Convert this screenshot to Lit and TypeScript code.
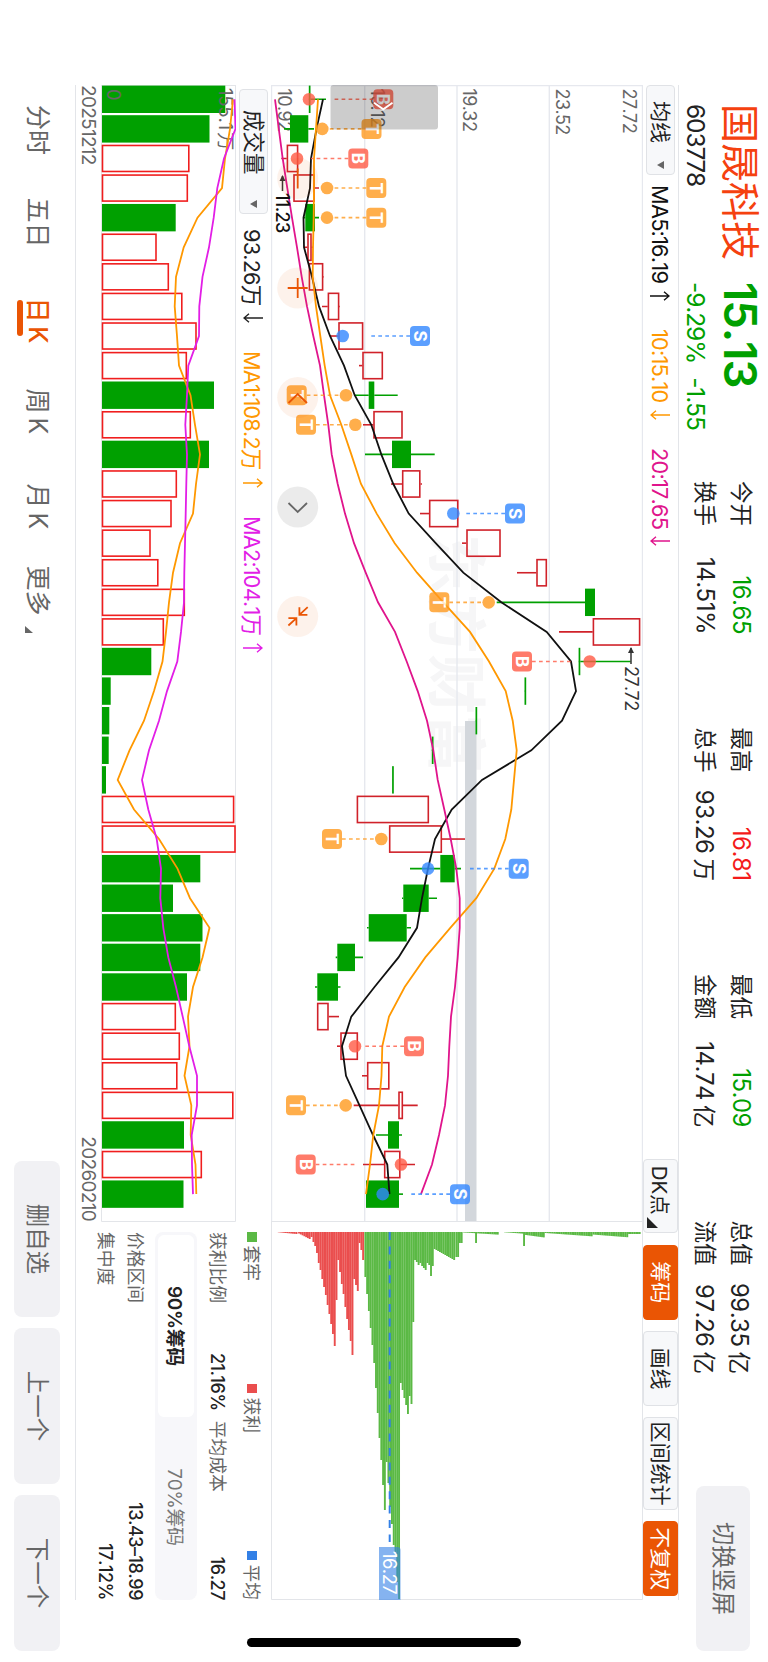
import { LitElement, css, html, svg } from 'lit'
import { customElement, property } from 'lit/decorators.js'

const STEP = 29.59
const FIRST = 14.3
const UP = '#d0222a'
const DOWN = '#00a000'

const centre = (i: number) => FIRST + i * STEP

const line = (values: number[], base: number) =>
  values.map((v, i) => `${centre(i).toFixed(1)},${(base - v).toFixed(1)}`).join(' ')

// [direction, low, body bottom, body top, high], heights above the price axis
type Candle = ['u' | 'd', number, number, number, number]
const candles: Candle[] = [
  ['d', 37, 36.8, 38.5, 54], ['d', 12, 18, 36.3, 42], ['u', 9.3, 14.7, 26.3, 26.3],
  ['u', 21.3, 21.3, 42.7, 47], ['d', 31, 33.3, 43, 47], ['u', 32, 35.3, 39.7, 41],
  ['u', 36.7, 36.7, 51.3, 51.8], ['u', 50, 55.7, 67.3, 68], ['u', 58, 66.3, 91.3, 91.3],
  ['u', 87, 90.3, 111, 111], ['d', 82.7, 96.7, 102.3, 125.7], ['u', 91, 101.3, 130.7, 130.7],
  ['d', 93, 120, 139, 162.7], ['u', 119, 130, 148.5, 150], ['u', 148, 157, 186.5, 186.5],
  ['u', 190, 194.3, 228.7, 228.7], ['u', 245, 264.3, 275, 275], ['d', 224.7, 313, 323, 323],
  ['u', 287, 320.7, 368.3, 368.3], ['d', 306.8, 306.6, 308.3, 358.7], ['d', 252.7, 252.5, 254.2, 254.2],
  ['d', 203.7, 203.5, 205.2, 205.2], ['d', 160, 159.8, 161.5, 161.5], ['d', 120.3, 120.1, 121.8, 121.8],
  ['u', 84.7, 84.7, 157, 157], ['u', 117, 117, 170, 193], ['d', 138, 168.3, 182.7, 189],
  ['d', 130, 131.3, 156.7, 165], ['d', 95, 96.7, 134.7, 139], ['d', 63.7, 65.3, 83, 91],
  ['d', 43, 45.3, 66, 68.5], ['u', 45, 45, 56.7, 67], ['u', 65, 68.3, 86, 86],
  ['u', 90, 95, 117.5, 117.5], ['u', 81.7, 126.3, 131, 145.7], ['d', 104, 116, 127, 130],
  ['u', 91, 112, 128.5, 143], ['d', 94, 94, 127, 131],
]

const ma5 = [51, 44.5, 39, 38, 31.5, 32, 40, 47, 58, 72, 82.7, 99.3, 109.3, 121.3, 136.7, 163.7, 191.3, 229.3,
  274.7, 299, 304, 290, 259.3, 210, 179.7, 163, 156, 150, 145, 126.5, 102.5, 79.3, 70, 74, 87.5, 101, 115.3, 117.5]
const ma10 = [46, 44, 42, 42, 41.7, 41, 40.7, 44, 48.3, 52.7, 58, 69.3, 79.3, 89, 104.7, 122.7, 145, 171.3,
  198, 217, 233.7, 240.7, 244.7, 242, 239.3, 233.3, 222.3, 204.3, 178.3, 153.3, 132.7, 117, 110.3, 109.5, 107, 101.3, 98, 94]
const ma20 = [3, 6.8, 10.7, 15.3, 20, 25, 29.7, 35, 41.3, 48, 52, 56.3, 59.7, 65.7, 73, 82, 93.7, 106,
  123, 134.7, 145.7, 155, 161.3, 165.7, 172.3, 178.7, 184.3, 187.7, 187.7, 185.7, 183, 179, 177.3, 176, 173, 167, 160, 149]

// trade marks: candle, letter, dot height, start of the dotted line, badge height
type Mark = [number, 'B' | 'S' | 'T', number, number, number]
const marks: Mark[] = [
  [0, 'B', 37, 62, 111.3], [1, 'T', 50.3, 50.3, 99.5], [2, 'B', 25, 39, 86.3],
  [3, 'T', 55, 55, 104.3], [4, 'T', 55, 55, 104.3], [8, 'S', 70.7, 98.7, 148],
  [10, 'T', 74, 74, 24.7], [11, 'T', 83.3, 83.3, 34], [14, 'S', 181.3, 194, 243],
  [17, 'T', 216.7, 216.7, 167.3], [19, 'B', 317.7, 299.7, 250], [25, 'T', 109.3, 109.3, 60],
  [26, 'S', 156, 197, 246.7], [32, 'B', 83, 93, 142], [34, 'T', 73.7, 73.7, 24],
  [36, 'B', 129, 83, 33.7], [37, 'S', 110.7, 138, 188],
]
const markColour = { B: '#ff5b45', S: '#3388ff', T: '#ff9a1f' }

const volumes: ['u' | 'd', number][] = [
  ['d', 123.3], ['d', 107.5], ['u', 87.5], ['u', 86], ['d', 73.7], ['u', 54.7], ['u', 67], ['u', 80.5],
  ['u', 94.7], ['u', 85], ['d', 112], ['u', 89], ['d', 107], ['u', 75], ['u', 69.7], ['u', 48.7],
  ['u', 56.5], ['u', 83], ['u', 62], ['d', 49.3], ['d', 8.7], ['d', 7.3], ['d', 6.7], ['d', 4],
  ['u', 132.3], ['u', 133.7], ['d', 98.3], ['d', 71], ['d', 100.5], ['d', 98.3], ['d', 85], ['u', 74],
  ['u', 78], ['u', 75.5], ['u', 131.5], ['d', 82], ['u', 100], ['d', 81.5],
]
const vma5 = [131, 128, 123, 120, 95.5, 81.7, 74, 72.7, 75, 77, 88.5, 93, 98, 94, 91, 78, 71, 67, 64, 60.5,
  52, 42, 27.5, 15.7, 32, 57, 75.5, 88, 107.5, 100.5, 91, 86, 87.5, 82.5, 89.3, 88.7, 93.5, 94.3]
const vma10 = [132.5, 133.5, 122, 115.3, 111.7, 107, 100.5, 97.3, 97, 86.3, 85, 83.3, 85, 84.3, 83.7, 83, 82.3, 82,
  79, 75.3, 65, 57, 47, 40, 46.3, 54.7, 59, 58.3, 61.3, 66.3, 74, 80.7, 87.3, 95, 95, 89.7, 90, 91]

const CHIP = 1.774
const ramp = (from: number, a: number, to: number, b: number) => {
  const n = Math.round((to - from) / CHIP)
  return Array.from({ length: n + 1 }, (_, i) => [from + i * CHIP, a + ((b - a) * i) / n])
}
const run = (from: number, lengths: number[]) => lengths.map((l, i) => [from + i * CHIP, l])

// [height, length] of every chip bar
const profitChips = [
  ...ramp(6.7, 0.3, 25.3, 2), ...ramp(27, 1.5, 38, 7), [39.6, 5],
  ...run(41.4, [10, 14, 21, 31, 38, 47, 55, 63, 73, 82, 92, 102, 114, 68, 28, 40, 52, 62, 75, 87, 98, 109, 123,
    47, 53, 59, 11, 18, 28]),
]
const lockedChips = [
  ...run(93.3, [45, 62, 79, 96, 113, 131, 156, 181, 206, 228, 253, 278, 230, 251, 275, 292, 313, 320, 350, 367]),
  ...run(128.8, [151, 158, 166, 173, 182, 164, 172, 90, 28, 30, 33, 31, 34, 36, 38, 31, 33, 44, 34]),
  ...ramp(162.6, 17, 182.6, 28), ...run(184.3, [25, 25, 11, 11]),
  ...ramp(192, 0.5, 226, 2.6), [204, 11],
  ...ramp(233, 0.3, 250, 1.6), [252, 14], ...ramp(254, 3, 272, 5.4),
  ...ramp(273.5, 1, 320, 4.3), ...ramp(321.5, 2.6, 356, 5.2), ...ramp(357, 2, 367, 2),
]

const caret = svg`<path d="M0 0H8L4 7Z" fill="#666"/>`

@customElement('trend-arrow')
export class TrendArrow extends LitElement {
  @property() dir = 'up'

  render() {
    return html`
      <svg width="10" height="20" viewBox="0 0 10 20" fill="none" stroke="currentColor" stroke-width="1.4">
        <path d=${this.dir === 'up' ? 'M5 20V1M0.8 6L5 1L9.2 6' : 'M5 0V19M0.8 14L5 19L9.2 14'} />
      </svg>
    `
  }

  static styles = css`
    :host {
      display: inline-flex;
      margin-left: auto;
    }
  `
}

@customElement('quote-header')
export class QuoteHeader extends LitElement {
  stats = [
    ['今开', '16.65', '', 'down'], ['最高', '16.81', '', 'up'], ['最低', '15.09', '', 'down'], ['总值', '99.35', '亿', ''],
    ['换手', '14.51%', '', ''], ['总手', '93.26', '万', ''], ['金额', '14.74', '亿', ''], ['流值', '97.26', '亿', ''],
  ]

  render() {
    return html`
      <header>
        <div class="quote">
          <span class="name">国晟科技</span>
          <span class="price">15.13</span>
          <span class="code">603778</span>
          <span class="change"><span>-9.29%</span><span>-1.55</span></span>
        </div>
        <div class="stats">
          ${this.stats.map(([label, value, unit, tone]) => html`
            <div class="stat">
              <span class="label">${label}</span>
              <span class="value ${tone}">${value}${unit ? html`<span class="unit">${unit}</span>` : ''}</span>
            </div>
          `)}
        </div>
        <button>切换竖屏</button>
      </header>
    `
  }

  static styles = css`
    header {
      display: flex;
      box-sizing: border-box;
      height: 90px;
      padding-left: 104px;
      padding-right: 11px;
    }

    .quote {
      display: grid;
      grid-template-columns: 178px 199px;
      grid-template-rows: 55px 34px;
      align-items: center;
      white-space: nowrap;
    }

    .name {
      padding-bottom: 6px;
      font-size: 39px;
      color: #f5410f;
    }

    .price {
      font-size: 45.5px;
      font-weight: 600;
      letter-spacing: -1px;
      color: #00a000;
    }

    .code {
      font-size: 24.5px;
      letter-spacing: -1.1px;
      color: #222;
    }

    .change {
      display: flex;
      gap: 14px;
      font-size: 24.5px;
      letter-spacing: -1.1px;
      color: #00a000;
    }

    .stats {
      display: grid;
      grid-template-columns: repeat(4, 153px);
      grid-template-rows: 35.5px 35.5px;
      column-gap: 93.5px;
      align-content: start;
      align-items: center;
      padding-top: 9px;
      font-size: 22.5px;
      color: #222;
    }

    .stat {
      display: flex;
      justify-content: space-between;
      align-items: center;
      height: 35.5px;
      white-space: nowrap;
    }

    .label {
      padding-bottom: 3px;
    }

    .value {
      font-size: 24px;
      letter-spacing: -0.5px;
    }

    .unit {
      margin-left: 5px;
      font-size: 22.5px;
    }

    .up {
      color: #f41a1a;
    }

    .down {
      color: #00a000;
    }

    button {
      width: 165px;
      height: 54px;
      margin: 18px 0 0 auto;
      padding: 0 0 4px;
      border: 0;
      border-radius: 8px;
      background: #f1f1f4;
      font: inherit;
      font-size: 23.3px;
      color: #666;
    }
  `
}

@customElement('chart-toolbar')
export class ChartToolbar extends LitElement {
  render() {
    return html`
      <div class="bar">
        <span class="picker"><span class="label">均线</span><svg width="8" height="7">${caret}</svg></span>
        <span class="ma ma5">MA5:16.19<trend-arrow></trend-arrow></span>
        <span class="ma ma10">10:15.10<trend-arrow dir="down"></trend-arrow></span>
        <span class="ma ma20">20:17.65<trend-arrow dir="down"></trend-arrow></span>
        <div class="tools">
          <span class="tool dk">DK点<svg width="11" height="11"><path d="M11 0V11H0Z" fill="#222"/></svg></span>
          <span class="tool on">筹码</span>
          <span class="tool">画线</span>
          <span class="tool wide">区间统计</span>
          <span class="tool on">不复权</span>
        </div>
      </div>
    `
  }

  static styles = css`
    .bar {
      display: flex;
      align-items: center;
      box-sizing: border-box;
      height: 36px;
      width: 1515px;
      margin-left: 85px;
      border-top: 1px solid #e3e5e9;
      white-space: nowrap;
    }

    .picker {
      display: flex;
      align-items: center;
      justify-content: space-between;
      box-sizing: border-box;
      width: 90px;
      height: 29px;
      padding: 0 5px 0 15px;
      border: 1px solid #e0e2e6;
      border-radius: 4px;
      background: #f7f8fa;
      font-size: 21px;
      color: #222;
    }

    .label {
      padding-bottom: 4px;
    }

    .ma {
      display: flex;
      align-items: center;
      box-sizing: border-box;
      font-size: 21.8px;
      letter-spacing: -0.8px;
    }

    .ma5 {
      width: 116px;
      margin-left: 10px;
      color: #111;
    }

    .ma10 {
      width: 91px;
      margin-left: 28px;
      color: #ff9800;
    }

    .ma20 {
      width: 98px;
      margin-left: 28px;
      color: #e0148c;
    }

    .tools {
      display: flex;
      gap: 11.5px;
      margin-left: auto;
      padding-right: 4px;
    }

    .tool {
      display: flex;
      align-items: center;
      justify-content: center;
      box-sizing: border-box;
      width: 74.7px;
      height: 35px;
      padding-bottom: 4px;
      border: 1px solid #e0e2e6;
      border-radius: 4px;
      background: #f7f8fa;
      font-size: 21px;
      color: #222;
    }

    .dk {
      justify-content: flex-start;
      padding: 0 0 2px 6px;
      font-size: 20.5px;
    }

    .dk svg {
      margin: 18px 0 0 2px;
    }

    .wide {
      width: 92.5px;
    }

    .on {
      border-color: #ea5504;
      background: #ea5504;
      color: #fff;
    }
  `
}

@customElement('price-chart')
export class PriceChart extends LitElement {
  candle([dir, low, bottom, top, high]: Candle, i: number) {
    const x = centre(i)
    const colour = dir === 'u' ? UP : DOWN
    return svg`
      <g stroke=${colour} stroke-width="1.6">
        <path d="M${x} ${371 - low}V${371 - bottom}M${x} ${371 - top}V${371 - high}"/>
        ${dir === 'u'
          ? svg`<rect x=${x - 13.1} y=${371.7 - top} width="26.2" height=${top - bottom - 1.4} fill="none"/>`
          : svg`<rect x=${x - 13.7} y=${371 - top} width="27.4" height=${top - bottom} fill=${colour} stroke="none"/>`}
      </g>
    `
  }

  mark([i, letter, dot, start, badge]: Mark) {
    const x = centre(i)
    const colour = markColour[letter]
    const end = badge > start ? badge - 10 : badge + 10
    return svg`
      <g opacity="0.8">
        <circle cx=${x} cy=${371 - dot} r="6.3" fill=${colour}/>
        <path d="M${x} ${371 - end}V${371 - start}" stroke=${colour} stroke-width="1.6" stroke-dasharray="3.7 3.3"/>
        <rect x=${x - 10} y=${361 - badge} width="20" height="20" rx="4" fill=${colour}/>
        <text class="letter" x=${x} y=${377 - badge}>${letter}</text>
      </g>
    `
  }

  render() {
    return html`
      <svg width="1136" height="372">
        <text class="watermark" x="449" y="209">东方财富</text>
        <g stroke="#e6e8ee" stroke-width="1.4">
          <path d="M0 0.5H1136M0 93.7H1136M0 186H1136M0 278.3H1136M0 371.5H1136M0.5 0V372"/>
        </g>
        <rect x="636" y="166.5" width="500" height="11.5" fill="#d3d7dc"/>
        <g class="axis">
          <text x="3.5" y="20.5">27.72</text>
          <text x="3.5" y="87.5">23.52</text>
          <text x="3.5" y="180">19.32</text>
          <text x="3.5" y="272.5">15.12</text>
          <text x="3.5" y="365.5">10.92</text>
        </g>
        ${candles.map((c, i) => this.candle(c, i))}
        <g fill="none" stroke-width="1.8">
          <polyline points=${line(ma5, 371)} stroke="#111"/>
          <polyline points=${line(ma10, 371)} stroke="#ff9800"/>
          <polyline points=${line(ma20, 371)} stroke="#e0148c"/>
        </g>
        ${marks.map(m => this.mark(m))}
        <rect x="0" y="205" width="44.5" height="107.5" rx="3" fill="#000" fill-opacity="0.2"/>
        <path d="M17.7 250.5L24.3 259.7L17.7 269" fill="none" stroke="#fff" stroke-width="1.8"/>

        <g class="note">
          <path d="M579 12H563" stroke="#333" stroke-width="1.5"/>
          <path d="M562 12L568 9V15Z" fill="#333"/>
          <text x="581" y="18.5">27.72</text>
          <path d="M106 360.5H91" stroke="#333" stroke-width="1.5"/>
          <path d="M90 360.5L96 357.5V363.5Z" fill="#333"/>
          <text class="low" x="108" y="367.5">11.23</text>
        </g>

        <g fill="none" stroke="#ea5504" stroke-width="1.8">
          <g fill="#ea5504" fill-opacity="0.08" stroke="none">
            <circle cx="93.5" cy="345.3" r="20.5"/>
            <circle cx="203" cy="345.3" r="20.5"/>
            <circle cx="312.5" cy="345.3" r="20.5"/>
            <circle cx="531.5" cy="345.3" r="20.5"/>
          </g>
          <circle cx="422" cy="345.3" r="20.5" fill="#000" fill-opacity="0.08" stroke="none"/>
          <path d="M83.5 345.3H103.5"/>
          <path d="M193 345.3H213M203 335.3V355.3"/>
          <path d="M318 336L309 345.3L318 354.5"/>
          <path d="M418 336L427 345.3L418 354.5" stroke="#666"/>
          <path d="M522.2 335.3L529.8 343.6M529.8 335.6V343.6H522.2M540.5 354.6L533.2 346.6M540.5 346.6H533.2V354.6"/>
        </g>
      </svg>
    `
  }

  static styles = css`
    :host,
    svg {
      display: block;
    }

    .axis {
      font-size: 18px;
      letter-spacing: -0.6px;
      fill: #666;
    }

    .watermark {
      font-size: 60px;
      font-weight: 700;
      fill: #f6f6f7;
    }

    .letter {
      font-size: 17px;
      font-weight: 700;
      text-anchor: middle;
      fill: #fff;
    }

    .note {
      font-size: 18px;
      letter-spacing: -0.6px;
      fill: #333;
    }

    .low {
      font-weight: 500;
      fill: #111;
    }
  `
}

@customElement('chip-chart')
export class ChipChart extends LitElement {
  bars(chips: number[][]) {
    return chips.map(([h, l]) => svg`<rect x="11" y=${370 - h} width=${l} height="1.9"/>`)
  }

  render() {
    return html`
      <svg width="379" height="372">
        <path d="M0 0.5H378.5V371.5H0M0.5 0V372" fill="none" stroke="#e3e5e9"/>
        <g fill="#ea4e4e">${this.bars(profitChips)}</g>
        <g fill="#5bb945">${this.bars(lockedChips)}</g>
        <path d="M11 253.3H321" stroke="#3380e6" stroke-width="2" stroke-dasharray="8 6.4"/>
        <path d="M379 242.5H329a3 3 0 0 0-3 3V264H379Z" fill="#3380e6" fill-opacity="0.6"/>
        <text x="330" y="260">16.27</text>
      </svg>
    `
  }

  static styles = css`
    :host,
    svg {
      display: block;
    }

    text {
      font-size: 18.5px;
      letter-spacing: -0.6px;
      fill: #fff;
    }
  `
}

@customElement('volume-chart')
export class VolumeChart extends LitElement {
  render() {
    return html`
      <div class="head">
        <span class="picker"><span class="label">成交量</span><svg width="8" height="7">${caret}</svg></span>
        <span class="item total">93.26万<trend-arrow dir="down"></trend-arrow></span>
        <span class="item ma1">MA1:108.2万<trend-arrow></trend-arrow></span>
        <span class="item ma2">MA2:104.1万<trend-arrow></trend-arrow></span>
      </div>
      <svg width="1137" height="135">
        <path d="M0 0.5H1136.5V134.5H0M0.5 0V135" fill="none" stroke="#e3e5e9"/>
        ${volumes.map(([dir, v], i) => dir === 'u'
          ? svg`<rect x=${centre(i) - 13} y=${134.7 - v} width="26" height=${v - 1.2} fill="#fff" stroke="#f01e1e" stroke-width="1.6"/>`
          : svg`<rect x=${centre(i) - 13.7} y=${134 - v} width="27.4" height=${v} fill=${DOWN}/>`)}
        <text x="4" y="129">0</text>
        <text x="3" y="17.5">155.1<tspan dx="2">万</tspan></text>
        <g fill="none" stroke-width="1.8">
          <polyline points=${line(vma5, 134)} stroke="#ff9800"/>
          <polyline points=${line(vma10, 134)} stroke="#e21ee6"/>
        </g>
      </svg>
      <div class="dates"><span>20251212</span><span>20260210</span></div>
    `
  }

  static styles = css`
    :host,
    svg {
      display: block;
    }

    .head {
      display: flex;
      align-items: center;
      height: 35px;
      padding-left: 4px;
      white-space: nowrap;
    }

    .picker {
      display: flex;
      align-items: center;
      justify-content: space-between;
      box-sizing: border-box;
      width: 125px;
      height: 28.5px;
      padding: 0 5px 0 20px;
      border: 1px solid #e0e2e6;
      border-radius: 4px;
      background: #f7f8fa;
      font-size: 21.5px;
      color: #222;
    }

    .label {
      padding-bottom: 4px;
    }

    .item {
      display: flex;
      align-items: center;
      box-sizing: border-box;
      font-size: 21.7px;
      letter-spacing: -0.8px;
    }

    .total {
      width: 94px;
      margin-left: 15px;
      color: #222;
    }

    .ma1 {
      width: 137px;
      margin-left: 28px;
      color: #ff9800;
    }

    .ma2 {
      width: 137px;
      margin-left: 28px;
      color: #e21ee6;
    }

    text {
      font-size: 18.5px;
      letter-spacing: -0.2px;
      fill: #666;
    }

    .dates {
      display: flex;
      justify-content: space-between;
      align-items: center;
      height: 24px;
      font-size: 19px;
      letter-spacing: -0.7px;
      color: #666;
    }
  `
}

@customElement('chip-panel')
export class ChipPanel extends LitElement {
  render() {
    return html`
      <div class="legend">
        <span class="key"><i class="box locked"></i><span class="label">套牢</span></span>
        <span class="key"><i class="box profit"></i><span class="label">获利</span></span>
        <span class="key"><i class="box mean"></i><span class="label">平均</span></span>
      </div>
      <div class="row first">
        <span class="label ratio">获利比例</span><b>21.16%</b>
        <span class="label cost">平均成本</span><b class="end">16.27</b>
      </div>
      <div class="tabs">
        <span class="tab active">90%筹码</span>
        <span class="tab">70%筹码</span>
      </div>
      <div class="row"><span class="label">价格区间</span><b class="end">13.43–18.99</b></div>
      <div class="row"><span class="label">集中度</span><b class="end">17.12%</b></div>
    `
  }

  static styles = css`
    :host {
      display: block;
      width: 368px;
      margin-left: 11px;
      font-size: 17.8px;
      color: #666;
      white-space: nowrap;
    }

    .legend {
      display: flex;
      justify-content: space-between;
      align-items: center;
      height: 39px;
    }

    .label {
      padding-bottom: 3px;
    }

    .key {
      display: flex;
      align-items: center;
      gap: 4px;
    }

    .key:nth-child(2) {
      padding-right: 15px;
    }

    .box {
      width: 9.5px;
      height: 9.5px;
      margin-bottom: 1px;
    }

    .locked {
      background: #5bb945;
    }

    .profit {
      background: #ea4e4e;
    }

    .mean {
      background: #3380e6;
    }

    .row {
      display: flex;
      align-items: center;
      height: 29.5px;
    }

    .first {
      height: 29px;
      padding-bottom: 6px;
    }

    .ratio {
      width: 121px;
    }

    .cost {
      margin-left: 10px;
    }

    b {
      font-size: 18px;
      font-weight: 500;
      letter-spacing: -0.5px;
      color: #222;
    }

    .end {
      margin-left: auto;
    }

    .tabs {
      display: grid;
      grid-template-columns: 182px 1fr;
      box-sizing: border-box;
      height: 42px;
      margin-bottom: 5px;
      padding: 3px;
      border-radius: 8px;
      background: #f7f7fa;
    }

    .tab {
      display: flex;
      align-items: center;
      justify-content: center;
      padding-bottom: 2px;
      border-radius: 6px;
      font-size: 19px;
      letter-spacing: -0.4px;
      color: #777;
    }

    .active {
      background: #fff;
      font-weight: 600;
      color: #222;
    }
  `
}

@customElement('period-bar')
export class PeriodBar extends LitElement {
  render() {
    return html`
      <footer>
        <div class="periods">
          <span class="period">分时</span>
          <span class="period">五日</span>
          <span class="period active">日 K</span>
          <span class="period">周 K</span>
          <span class="period">月 K</span>
          <span class="period more">更多<svg width="7" height="8"><path d="M7 0V8H0Z" fill="#666"/></svg></span>
        </div>
        <div class="actions">
          <button>删自选</button>
          <button>上一个</button>
          <button>下一个</button>
        </div>
      </footer>
    `
  }

  static styles = css`
    footer {
      display: flex;
      justify-content: space-between;
      align-items: center;
      height: 75px;
      padding: 0 11px 0 105px;
    }

    .periods {
      display: grid;
      grid-template-columns: 92.5px 100px 91px 95px 82px auto;
      padding-bottom: 2px;
      font-size: 25px;
      line-height: 36px;
      word-spacing: -3px;
      color: #666;
    }

    .active {
      justify-self: start;
      position: relative;
      font-weight: 500;
      color: #ea5504;
    }

    .active::after {
      content: '';
      position: absolute;
      left: 2px;
      bottom: -3px;
      width: 36px;
      height: 5.5px;
      border-radius: 3px;
      background: #ea5504;
    }

    .more svg {
      margin-left: 10px;
      vertical-align: -4px;
    }

    .actions {
      display: flex;
      gap: 11px;
    }

    button {
      width: 156px;
      height: 46px;
      padding: 0 0 3px;
      border: 0;
      border-radius: 8px;
      background: #f1f1f4;
      font: inherit;
      font-size: 23.5px;
      color: #666;
    }
  `
}

@customElement('app-root')
export class AppRoot extends LitElement {
  render() {
    return html`
      <main>
        <quote-header></quote-header>
        <chart-toolbar></chart-toolbar>
        <div class="charts">
          <price-chart></price-chart>
          <chip-chart></chip-chart>
          <volume-chart></volume-chart>
          <chip-panel></chip-panel>
        </div>
        <period-bar></period-bar>
        <div class="home"></div>
      </main>
    `
  }

  static styles = css`
    :host {
      display: block;
      width: 768px;
      height: 1662px;
      overflow: hidden;
      background: #fff;
    }

    /* landscape screen, turned a quarter clockwise */
    main {
      position: relative;
      width: 1662px;
      height: 768px;
      transform-origin: 0 0;
      transform: translateX(768px) rotate(90deg);
      font-family: Inter, 'Noto Sans CJK SC', sans-serif;
      font-kerning: none;
      font-feature-settings: 'calt' 0;
    }

    quote-header,
    chart-toolbar,
    period-bar {
      display: block;
    }

    quote-header {
      height: 89px;
    }

    .charts {
      display: grid;
      grid-template-columns: 1136px 379px;
      grid-template-rows: 372px 195px;
      box-sizing: border-box;
      width: 1515px;
      height: 568px;
      margin-left: 85px;
      border-bottom: 1px solid #e3e5e9;
    }

    .home {
      position: absolute;
      left: 1638px;
      top: 246.5px;
      width: 9px;
      height: 274.5px;
      border-radius: 5px;
      background: #000;
    }
  `
}
